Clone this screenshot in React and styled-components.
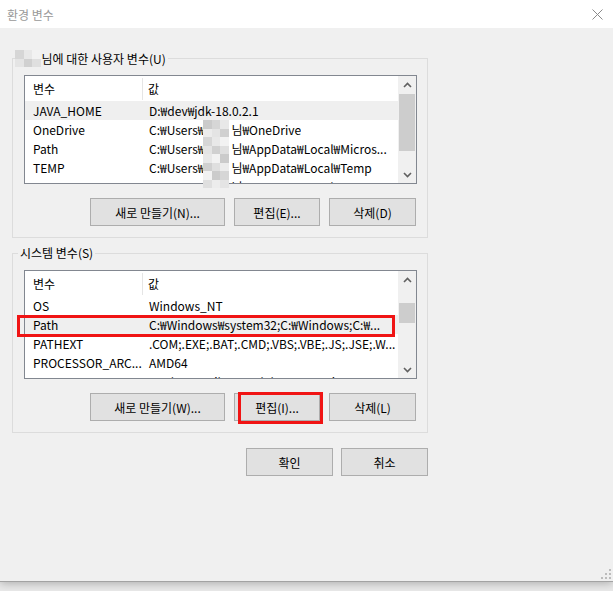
import React from "react";
import styled, { createGlobalStyle } from "styled-components";

// global page styles
const GlobalStyle = createGlobalStyle`
  html, body {
    margin: 0;
    padding: 0;
    background: #e9e9e9;
  }
  body {
    font-family: "Noto Sans CJK KR", "Noto Sans", sans-serif;
    font-size: 12px;
    color: #000;
  }
`;

const Page = styled.div`
  width: 613px;
  height: 591px;
  overflow: hidden;
`;

const Window = styled.div`
  position: relative;
  width: 613px;
  height: 581px;
  display: flex;
  flex-direction: column;
  background: #f0f0f0;
  box-shadow: 0 1px 0 #a3a3a3, 0 2px 9px rgba(0, 0, 0, 0.28);
`;

const TitleBar = styled.div`
  height: 28px;
  flex: none;
  display: flex;
  align-items: center;
  justify-content: space-between;
  padding: 0 10px 0 7px;
  background: #fff;
  color: #999;
  font-size: 12px;
`;

const Body = styled.div`
  flex: 1;
  display: flex;
  flex-direction: column;
  padding: 30px 0 0 12px;
`;

const Group = styled.div`
  position: relative;
  width: 416px;
  box-sizing: border-box;
  border: 1px solid #dcdcdc;
  padding: 16px 11px 11px 11px;
  margin-bottom: ${(p) => p.gapAfter || 0}px;
`;

const Legend = styled.div`
  position: absolute;
  top: -9px;
  left: 5px;
  display: flex;
  align-items: center;
  padding: 0 2px;
  line-height: 16px;
  background: #f0f0f0;
`;

const List = styled.div`
  display: flex;
  width: 393px;
  height: 109px;
  box-sizing: border-box;
  border: 1px solid #828790;
  background: #fff;
  overflow: hidden;
`;

const Rows = styled.div`
  flex: 1;
  overflow: hidden;
`;

const Header = styled.div`
  display: flex;
  align-items: center;
  height: 25px;
`;

const Divider = styled.span`
  width: 1px;
  height: 22px;
  background: #e5e5e5;
`;

const Row = styled.div`
  display: flex;
  align-items: center;
  height: 19px;
  background: ${(p) => (p.selected ? "#efefef" : "transparent")};
`;

const NameCell = styled.span`
  width: ${(p) => (p.header ? 109 : 110)}px;
  padding-left: 8px;
  flex: none;
  white-space: nowrap;
  overflow: hidden;
`;

const ValueCell = styled.span`
  padding-left: ${(p) => (p.header ? 5 : 6)}px;
  white-space: nowrap;
  overflow: hidden;
`;

const Hidden = styled.span`
  display: inline-block;
  width: ${(p) => p.w}px;
`;

const ScrollTrack = styled.div`
  position: relative;
  width: 18px;
  flex: none;
  display: flex;
  flex-direction: column;
  justify-content: space-between;
  align-items: center;
  background: #f0f0f0;
`;

const Arrow = styled.div`
  height: 17px;
  display: flex;
  align-items: center;
  justify-content: center;
`;

const Thumb = styled.div`
  position: absolute;
  left: 1px;
  right: 1px;
  top: ${(p) => p.top}px;
  height: ${(p) => p.h}px;
  background: #cdcdcd;
`;

const ButtonRow = styled.div`
  display: flex;
  justify-content: flex-end;
  gap: ${(p) => p.gap || 9}px;
  margin-top: ${(p) => p.top || 14}px;
  width: ${(p) => p.width || 392}px;
`;

const Button = styled.div`
  position: relative;
  width: ${(p) => p.w}px;
  height: 28px;
  box-sizing: border-box;
  display: flex;
  align-items: center;
  justify-content: center;
  background: #e1e1e1;
  border: 1px solid #adadad;
  white-space: nowrap;

  ${(p) =>
    p.marked &&
    `
    &::after {
      content: "";
      position: absolute;
      left: 3px;
      top: -2px;
      right: -4px;
      bottom: -4px;
      border: 3px solid #f01414;
    }
  `}
`;

const Mark = styled.div`
  position: absolute;
  left: ${(p) => p.x}px;
  top: ${(p) => p.y}px;
  width: ${(p) => p.w}px;
  height: ${(p) => p.h}px;
  box-sizing: border-box;
  border: 3px solid #f01414;
`;

const MosaicGrid = styled.div`
  display: grid;
  grid-template-columns: repeat(${(p) => p.cols}, ${(p) => p.cell}px);
  grid-auto-rows: ${(p) => p.cell}px;
  flex: none;
`;

const Redact = styled.div`
  position: absolute;
  left: ${(p) => p.x}px;
  top: ${(p) => p.y}px;
`;

const Grip = styled.svg`
  position: absolute;
  right: 2px;
  bottom: 2px;
`;

const shades = ["#e4e4e4", "#d6d6d6", "#ececec", "#cbcbcb", "#dfdfdf", "#f2f2f2", "#d0d0d0", "#e8e8e8"];

const Mosaic = ({ cols, rows, cell, seed = 0, style }) => (
  <MosaicGrid cols={cols} cell={cell} style={style}>
    {Array.from({ length: cols * rows }).map((_, i) => (
      <div key={i} style={{ background: shades[(i * 5 + seed + (i % 3)) % shades.length] }} />
    ))}
  </MosaicGrid>
);

const Chevron = ({ up }) => (
  <svg width="9" height="6" viewBox="0 0 9 6">
    <path
      d={up ? "M1 5 L4.5 1.5 L8 5" : "M1 1 L4.5 4.5 L8 1"}
      fill="none"
      stroke="#606060"
      strokeWidth="1.6"
    />
  </svg>
);

const VarList = ({ rows, thumbTop, thumbH }) => (
  <List>
    <Rows>
      <Header>
        <NameCell header>변수</NameCell>
        <Divider />
        <ValueCell header>값</ValueCell>
      </Header>
      {rows.map((r, i) => (
        <Row key={i} selected={r.selected}>
          <NameCell>{r.name}</NameCell>
          <ValueCell>{r.value}</ValueCell>
        </Row>
      ))}
    </Rows>
    <ScrollTrack>
      <Arrow>
        <Chevron up />
      </Arrow>
      <Thumb top={thumbTop} h={thumbH} />
      <Arrow>
        <Chevron />
      </Arrow>
    </ScrollTrack>
  </List>
);

const userRows = [
  { name: "JAVA_HOME", value: "D:₩dev₩jdk-18.0.2.1", selected: true },
  { name: "OneDrive", value: <>C:₩Users₩<Hidden w={27} />님₩OneDrive</> },
  { name: "Path", value: <>C:₩Users₩<Hidden w={27} />님₩AppData₩Local₩Micros...</> },
  { name: "TEMP", value: <>C:₩Users₩<Hidden w={27} />님₩AppData₩Local₩Temp</> },
  { name: "TMP", value: <>C:₩Users₩<Hidden w={27} />님₩AppData₩Local₩Temp</> },
];

const systemRows = [
  { name: "OS", value: "Windows_NT" },
  { name: "Path", value: "C:₩Windows₩system32;C:₩Windows;C:₩...", selected: true },
  { name: "PATHEXT", value: ".COM;.EXE;.BAT;.CMD;.VBS;.VBE;.JS;.JSE;.W..." },
  { name: "PROCESSOR_ARC...", value: "AMD64" },
  { name: "PROCESSOR_ID...", value: "Intel64 Family 6 Model 158 Stepping" },
];

export default function App() {
  return (
    <Page>
      <GlobalStyle />
      <Window>
        <TitleBar>
          <span>환경 변수</span>
          <svg width="11" height="11" viewBox="0 0 11 11">
            <path d="M0.5 0.5 L10.5 10.5 M10.5 0.5 L0.5 10.5" stroke="#8a8a8a" strokeWidth="1" />
          </svg>
        </TitleBar>

        <Body>
          <Group gapAfter={15}>
            <Legend>
              <Mosaic cols={3} rows={2} cell={8.5} seed={1} style={{ marginLeft: -5, marginRight: 1 }} />
              님에 대한 사용자 변수(U)
            </Legend>
            <VarList rows={userRows} thumbTop={18} thumbH={57} />
            <Redact x={190} y={61}>
              <Mosaic cols={3} rows={8} cell={8.5} seed={3} />
            </Redact>
            <ButtonRow>
              <Button w={135}>새로 만들기(N)...</Button>
              <Button w={86}>편집(E)...</Button>
              <Button w={87}>삭제(D)</Button>
            </ButtonRow>
          </Group>

          <Group>
            <Legend>시스템 변수(S)</Legend>
            <VarList rows={systemRows} thumbTop={32} thumbH={20} />
            <Mark x={4} y={61} w={378} h={22} />
            <ButtonRow>
              <Button w={135}>새로 만들기(W)...</Button>
              <Button w={86} marked>
                편집(I)...
              </Button>
              <Button w={87}>삭제(L)</Button>
            </ButtonRow>
          </Group>

          <ButtonRow top={15} gap={8} width={416}>
            <Button w={87}>확인</Button>
            <Button w={87}>취소</Button>
          </ButtonRow>
        </Body>

        <Grip width="10" height="10" viewBox="0 0 10 10">
          <rect x="8" y="0" width="2" height="2" fill="#bcbcbc" />
          <rect x="4" y="4" width="2" height="2" fill="#bcbcbc" />
          <rect x="8" y="4" width="2" height="2" fill="#bcbcbc" />
          <rect x="0" y="8" width="2" height="2" fill="#bcbcbc" />
          <rect x="4" y="8" width="2" height="2" fill="#bcbcbc" />
          <rect x="8" y="8" width="2" height="2" fill="#bcbcbc" />
        </Grip>
      </Window>
    </Page>
  );
}
